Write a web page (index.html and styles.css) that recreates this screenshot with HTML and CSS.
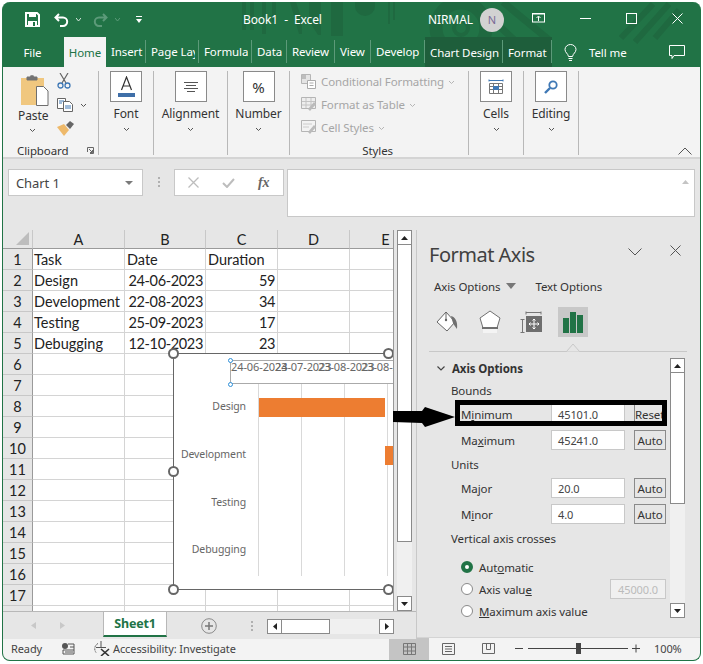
FILE: index.html
```html
<!DOCTYPE html>
<html lang="en">
<head>
<meta charset="utf-8">
<title>Book1 - Excel</title>
<link rel="stylesheet" href="styles.css">
</head>
<body>
<div class="win">
  <header class="titlebar">
    <svg class="pattern" width="696" height="65" viewBox="0 0 696 65">
      <g fill="#1f6940">
        <rect x="239" y="0" width="4" height="28"/><rect x="247" y="0" width="4" height="28"/><rect x="259" y="0" width="4" height="32"/><rect x="269" y="0" width="4" height="20"/>
        <path d="M287 0h6l6 18v14h-3z"/><path d="M306 0h12v33h-3l-9-14z"/><rect x="328" y="0" width="12" height="34"/>
        <path d="M352 0h20v4a10 10 0 0 1-20 0z"/>
        <rect x="385" y="0" width="2" height="22"/><rect x="390" y="0" width="2" height="18"/>
      </g>
      <g fill="none" stroke="#1f6940">
        <circle cx="458" cy="26" r="25" stroke-width="13"/>
        <circle cx="458" cy="26" r="7" stroke-width="4"/>
        <path d="M470 0l50 46M500 0l46 38" stroke-width="7"/>
        <path d="M618 36l32-34M632 40l34-38M652 36l24-28" stroke-width="6"/>
      </g>
    </svg>
    <svg class="ic save" width="15" height="15" viewBox="0 0 15 15"><path d="M1 1h11l2 2v11H1z" fill="none" stroke="#fff" stroke-width="2"/><rect x="4" y="1" width="7" height="4" fill="#fff"/><rect x="3" y="9" width="9" height="5" fill="#fff"/><rect x="8" y="10" width="2" height="4" fill="#217346"/></svg>
    <svg class="ic undo" width="15" height="14" viewBox="0 0 15 14"><path d="M5 1L1.500 4.500 5 8M2 4.500h7a4.200 4.200 0 0 1 0 8.400H6" fill="none" stroke="#fff" stroke-width="2"/></svg>
    <svg class="ic chev-t" width="5" height="3" viewBox="0 0 5 3"><path d="M0 0l2.500 3L5 0" fill="none" stroke="#d9e8df"/></svg>
    <svg class="ic redo" width="15" height="14" viewBox="0 0 15 14"><path d="M10 1l3.500 3.500L10 8M13 4.500H6a4.200 4.200 0 0 0 0 8.400h3" fill="none" stroke="#5c9a79" stroke-width="2"/></svg>
    <svg class="ic chev-r" width="5" height="3" viewBox="0 0 5 3"><path d="M0 0l2.500 3L5 0" fill="none" stroke="#5c9a79"/></svg>
    <svg class="ic qat" width="6" height="7" viewBox="0 0 6 7"><rect y="0" width="6" height="1" fill="#fff"/><path d="M0 3h6L3 7z" fill="#fff"/></svg>
    <span class="doc">Book1&nbsp; -&nbsp; Excel</span>
    <span class="user">NIRMAL</span>
    <span class="avatar">N</span>
    <svg class="ic ribdisp" width="14" height="10" viewBox="0 0 14 10"><rect x=".5" y=".5" width="12" height="8.500" fill="none" stroke="#fff"/><path d="M0 1h13M6.500 8V3.500M4.500 5l2-2 2 2" fill="none" stroke="#fff"/></svg>
    <svg class="ic min" width="11" height="1" viewBox="0 0 11 1"><rect width="11" height="1" fill="#fff"/></svg>
    <svg class="ic max" width="11" height="11" viewBox="0 0 11 11"><rect x=".5" y=".5" width="10" height="10" fill="none" stroke="#fff"/></svg>
    <svg class="ic close" width="11" height="11" viewBox="0 0 11 11"><path d="M.5.500l10 10M10.500.500l-10 10" stroke="#fff" fill="none"/></svg>
  </header>

  <nav class="tabs">
    <span class="tab tab-file">File</span>
    <span class="tab tab-home">Home</span>
    <span class="tab sep">Insert</span>
    <span class="tab sep"><span class="clip">Page Layout</span></span>
    <span class="tab sep"><span class="clip">Formulas</span></span>
    <span class="tab sep">Data</span>
    <span class="tab sep">Review</span>
    <span class="tab sep">View</span>
    <span class="tab sep">Develop</span>
    <span class="tab sep dark">Chart Design</span>
    <span class="tab sep dark">Format</span>
    <svg class="ic bulb" width="13" height="17" viewBox="0 0 13 17"><path d="M4.500 12.500C4 9.500 1 8.500 1 5.500a5.500 5 0 0 1 11 0c0 3-3 4-3.500 7z" fill="none" stroke="#fff"/><path d="M4.500 14.500h4M5 16.500h3" stroke="#fff" fill="none"/></svg>
    <span class="tell">Tell me</span>
    <svg class="ic comment" width="16" height="14" viewBox="0 0 16 14"><path d="M.5.500h15v10H5l-2 3v-3H.5z" fill="none" stroke="#fff"/></svg>
  </nav>

  <section class="ribbon">
    <div class="group g-clip">
      <div class="clip-main">
        <div class="paste">
          <svg width="29" height="32" viewBox="0 0 29 32"><path d="M1 4h23v27H1z" fill="#f0c77f"/><path d="M7 3h2.500a3 3 0 0 1 5 0H17v3H7z" fill="#737373" stroke="#737373"/><path d="M16.500 12.500h7l4.500 4.500v14.500H16.500z" fill="#fff" stroke="#6e6e6e"/></svg>
          <span class="lab paste-lab">Paste</span>
          <svg class="chev" width="5" height="3" viewBox="0 0 5 3"><path d="M0 0l2.500 2.500L5 0" fill="none" stroke="#555"/></svg>
        </div>
        <div class="clip-small">
          <svg width="15" height="16" viewBox="0 0 15 16"><path d="M3 0l6 10M11 0L5 10" stroke="#666" fill="none" stroke-width="1.200"/><circle cx="3.500" cy="12.500" r="2.500" fill="none" stroke="#3f78b5" stroke-width="1.300"/><circle cx="10.500" cy="12.500" r="2.500" fill="none" stroke="#3f78b5" stroke-width="1.300"/></svg>
          <div class="copy-row">
            <svg width="16" height="14" viewBox="0 0 16 14"><path d="M.5.500h8v10h-8z" fill="#fff" stroke="#666"/><path d="M6.500 3.500h6l3 3v7h-9z" fill="#fff" stroke="#666"/><path d="M2 3h5M2 5h3M8 8h6M8 10h6" stroke="#3f78b5"/></svg>
            <svg class="chev" width="5" height="3" viewBox="0 0 5 3"><path d="M0 0l2.500 2.500L5 0" fill="none" stroke="#555"/></svg>
          </div>
          <svg width="17" height="15" viewBox="0 0 17 15"><path d="M0 6l7-3 5 6-5 6z" fill="#eeb96a"/><path d="M9 4l4-4 4 3-4 5z" fill="#666"/></svg>
        </div>
      </div>
      <div class="foot"><span>Clipboard</span><svg class="launch" width="7" height="7" viewBox="0 0 7 7"><path d="M.5 5V.500h6v6H3M2 2l3.500 3.500M5.500 3v2.500H3" fill="none" stroke="#666"/></svg></div>
    </div>

    <div class="group g-font big">
      <span class="box"><svg width="17" height="21" viewBox="0 0 17 21"><path d="M3.500 14L8.500 1l5 13M5 10h7" fill="none" stroke="#333" stroke-width="1.200"/><rect x="0" y="17" width="17" height="4" fill="#3f6fa8"/></svg></span>
      <span class="lab">Font</span>
      <svg class="chev" width="5" height="3" viewBox="0 0 5 3"><path d="M0 0l2.500 2.500L5 0" fill="none" stroke="#555"/></svg>
    </div>
    <div class="group g-align big">
      <span class="box"><svg width="14" height="10" viewBox="0 0 14 10"><path d="M0 .500h14M2 3.500h10M0 6.500h14M3 9.500h8" stroke="#555"/></svg></span>
      <span class="lab">Alignment</span>
      <svg class="chev" width="5" height="3" viewBox="0 0 5 3"><path d="M0 0l2.500 2.500L5 0" fill="none" stroke="#555"/></svg>
    </div>
    <div class="group g-num big">
      <span class="box pct">%</span>
      <span class="lab">Number</span>
      <svg class="chev" width="5" height="3" viewBox="0 0 5 3"><path d="M0 0l2.500 2.500L5 0" fill="none" stroke="#555"/></svg>
    </div>

    <div class="group g-styles">
      <div class="style-rows">
        <div class="srow"><svg width="15" height="15" viewBox="0 0 15 15"><path d="M.5.500h9v9h-9z" fill="#e4e4e4" stroke="#b5b5b5"/><rect x="1" y="1" width="4" height="4" fill="#bdbdbd"/><path d="M6.500 6.500h8v8h-8z" fill="#fff" stroke="#aaa"/><path d="M8.500 9h4M8.500 11.500h4" stroke="#aaa"/></svg><span>Conditional Formatting</span><svg class="chev" width="5" height="3" viewBox="0 0 5 3"><path d="M0 0l2.500 2.500L5 0" fill="none" stroke="#b5b5b5"/></svg></div>
        <div class="srow"><svg width="15" height="15" viewBox="0 0 15 15"><path d="M.5.500h14v11h-14z" fill="#eee" stroke="#b5b5b5"/><path d="M5 1v10M10 1v10M1 4.500h13M1 8h13" stroke="#c4c4c4"/><path d="M7 12l6-7 2 2-6 7z" fill="#bbb"/></svg><span>Format as Table</span><svg class="chev" width="5" height="3" viewBox="0 0 5 3"><path d="M0 0l2.500 2.500L5 0" fill="none" stroke="#b5b5b5"/></svg></div>
        <div class="srow"><svg width="15" height="15" viewBox="0 0 15 15"><path d="M.5.500h14v11h-14z" fill="#f3f3f3" stroke="#b5b5b5"/><path d="M7 12l6-7 2 2-6 7z" fill="#bbb"/><path d="M2 4h9M2 7h6" stroke="#ccc"/></svg><span>Cell Styles</span><svg class="chev" width="5" height="3" viewBox="0 0 5 3"><path d="M0 0l2.500 2.500L5 0" fill="none" stroke="#b5b5b5"/></svg></div>
      </div>
      <div class="foot center"><span>Styles</span></div>
    </div>

    <div class="group g-cells big">
      <span class="box"><svg width="16" height="16" viewBox="0 0 16 16"><path d="M1 1.500h14M1 .500v2M15 .500v2" stroke="#3f78b5"/><path d="M1.500 4.500h13v10h-13zM1.500 7.500h13M1.500 10.500h13M5.500 4.500v10M10.500 4.500v10" fill="none" stroke="#777"/><rect x="5" y="7" width="6" height="4" fill="#3f78b5"/></svg></span>
      <span class="lab">Cells</span>
      <svg class="chev" width="5" height="3" viewBox="0 0 5 3"><path d="M0 0l2.500 2.500L5 0" fill="none" stroke="#555"/></svg>
    </div>
    <div class="group g-edit big">
      <span class="box"><svg width="14" height="14" viewBox="0 0 14 14"><circle cx="9" cy="5" r="3.700" fill="none" stroke="#3f78b5" stroke-width="1.800"/><path d="M6 8l-5 5" stroke="#3f78b5" stroke-width="2.400"/></svg></span>
      <span class="lab">Editing</span>
      <svg class="chev" width="5" height="3" viewBox="0 0 5 3"><path d="M0 0l2.500 2.500L5 0" fill="none" stroke="#555"/></svg>
    </div>
    <svg class="collapse" width="14" height="8" viewBox="0 0 14 8"><path d="M.5 7.500L7 1l6.500 6.500" fill="none" stroke="#555"/></svg>
  </section>

  <section class="fbar">
    <div class="namebox"><span>Chart 1</span><svg width="8" height="4" viewBox="0 0 8 4"><path d="M0 0h8L4 4z" fill="#7a7a7a"/></svg></div>
    <svg class="grip" width="2" height="10" viewBox="0 0 2 10"><path d="M0 0h2v2H0zM0 4h2v2H0zM0 8h2v2H0z" fill="#b0b0b0"/></svg>
    <div class="fxbox">
      <svg width="11" height="11" viewBox="0 0 11 11"><path d="M.5.500l10 10M10.500.500l-10 10" stroke="#bdbdbd" stroke-width="1.300" fill="none"/></svg>
      <svg width="13" height="10" viewBox="0 0 13 10"><path d="M1 5l4 4 7-8" stroke="#bdbdbd" stroke-width="2" fill="none"/></svg>
      <span class="fx">fx</span>
    </div>
    <div class="finput"><svg width="7" height="4" viewBox="0 0 7 4"><path d="M0 4l3.500-4L7 4z" fill="#c4c4c4"/></svg></div>
  </section>

  <main class="main">
    <div class="sheetcol">
      <div class="sheetrow">
        <div class="sheet">
          <div class="grid">
            <div class="corner"><svg width="13" height="13" viewBox="0 0 13 13"><path d="M13 0v13H0z" fill="#bdbdbd"/></svg></div>
            <div class="ch">A</div><div class="ch">B</div><div class="ch">C</div><div class="ch">D</div><div class="ch">E</div>
            <div class="rh">1</div><div class="c l">Task</div><div class="c">Date</div><div class="c">Duration</div><div class="c"></div><div class="c"></div>
            <div class="rh">2</div><div class="c l">Design</div><div class="c r">24-06-2023</div><div class="c r">59</div><div class="c"></div><div class="c"></div>
            <div class="rh">3</div><div class="c l">Development</div><div class="c r">22-08-2023</div><div class="c r">34</div><div class="c"></div><div class="c"></div>
            <div class="rh">4</div><div class="c l">Testing</div><div class="c r">25-09-2023</div><div class="c r">17</div><div class="c"></div><div class="c"></div>
            <div class="rh">5</div><div class="c l">Debugging</div><div class="c r">12-10-2023</div><div class="c r">23</div><div class="c"></div><div class="c"></div>
            <div class="rh">6</div><div class="c"></div><div class="c"></div><div class="c"></div><div class="c"></div><div class="c"></div>
            <div class="rh">7</div><div class="c"></div><div class="c"></div><div class="c"></div><div class="c"></div><div class="c"></div>
            <div class="rh">8</div><div class="c"></div><div class="c"></div><div class="c"></div><div class="c"></div><div class="c"></div>
            <div class="rh">9</div><div class="c"></div><div class="c"></div><div class="c"></div><div class="c"></div><div class="c"></div>
            <div class="rh">10</div><div class="c"></div><div class="c"></div><div class="c"></div><div class="c"></div><div class="c"></div>
            <div class="rh">11</div><div class="c"></div><div class="c"></div><div class="c"></div><div class="c"></div><div class="c"></div>
            <div class="rh">12</div><div class="c"></div><div class="c"></div><div class="c"></div><div class="c"></div><div class="c"></div>
            <div class="rh">13</div><div class="c"></div><div class="c"></div><div class="c"></div><div class="c"></div><div class="c"></div>
            <div class="rh">14</div><div class="c"></div><div class="c"></div><div class="c"></div><div class="c"></div><div class="c"></div>
            <div class="rh">15</div><div class="c"></div><div class="c"></div><div class="c"></div><div class="c"></div><div class="c"></div>
            <div class="rh">16</div><div class="c"></div><div class="c"></div><div class="c"></div><div class="c"></div><div class="c"></div>
            <div class="rh">17</div><div class="c"></div><div class="c"></div><div class="c"></div><div class="c"></div><div class="c"></div>
            <div class="rh"></div><div class="c"></div><div class="c"></div><div class="c"></div><div class="c"></div><div class="c"></div>
          </div>
          <div class="chart">
            <div class="axisbox"></div>
            <span class="date d1">24-06-2023</span><span class="date d2">24-07-2023</span><span class="date d3">23-08-2023</span><span class="date d4">23-08-2023</span>
            <i class="gl g1"></i><i class="gl g2"></i><i class="gl g3"></i><i class="gl g4"></i>
            <i class="bar b1"></i><i class="bar b2"></i>
            <span class="cat k1">Design</span><span class="cat k2">Development</span><span class="cat k3">Testing</span><span class="cat k4">Debugging</span>
            <i class="bh bh1"></i><i class="bh bh2"></i>
          </div>
          <i class="h h1"></i><i class="h h2"></i><i class="h h3"></i><i class="h h4"></i><i class="h h5"></i>
        </div>
        <div class="vscroll">
          <span class="sb-btn"><svg width="7" height="4" viewBox="0 0 7 4"><path d="M0 4l3.500-4L7 4z" fill="#222"/></svg></span>
          <span class="thumb"></span>
          <span class="sb-btn sb-end"><svg width="7" height="4" viewBox="0 0 7 4"><path d="M0 0l3.500 4L7 0z" fill="#222"/></svg></span>
        </div>
      </div>
      <div class="sheettabs">
        <svg class="nav1" width="5" height="7" viewBox="0 0 5 7"><path d="M5 0v7L0 3.500z" fill="#c8c8c8"/></svg>
        <svg class="nav2" width="5" height="7" viewBox="0 0 5 7"><path d="M0 0v7l5-3.500z" fill="#c8c8c8"/></svg>
        <span class="sheettab">Sheet1</span>
        <svg class="plus" width="16" height="16" viewBox="0 0 16 16"><circle cx="8" cy="8" r="7.300" fill="none" stroke="#8a8a8a"/><path d="M8 4v8M4 8h8" stroke="#777" stroke-width="1.500"/></svg>
        <svg class="tgrip" width="2" height="10" viewBox="0 0 2 10"><path d="M0 0h2v2H0zM0 4h2v2H0zM0 8h2v2H0z" fill="#b0b0b0"/></svg>
        <div class="hscroll">
          <span class="hb"><svg width="4" height="7" viewBox="0 0 4 7"><path d="M4 0v7L0 3.500z" fill="#222"/></svg></span>
          <span class="hthumb"></span>
          <span class="hb hb-end"><svg width="4" height="7" viewBox="0 0 4 7"><path d="M0 0v7l4-3.500z" fill="#222"/></svg></span>
        </div>
      </div>
    </div>

    <aside class="pane">
      <div class="phead">
        <h1>Format Axis</h1>
        <svg class="p-chev" width="14" height="8" viewBox="0 0 14 8"><path d="M.5.500L7 7l6.500-6.500" fill="none" stroke="#555"/></svg>
        <svg class="p-x" width="11" height="11" viewBox="0 0 11 11"><path d="M.5.500l10 10M10.500.500l-10 10" stroke="#555" fill="none"/></svg>
      </div>
      <div class="ptabs"><span>Axis Options</span><svg width="10" height="6" viewBox="0 0 10 6"><path d="M0 0h10L5 6z" fill="#777"/></svg><span class="pt2">Text Options</span></div>
      <div class="picons">
        <svg class="pi1" width="24" height="24" viewBox="0 0 24 24"><path d="M11 2l9 10-8 9-10-9z" fill="#fff" stroke="#666"/><path d="M11 2v8" stroke="#666"/><circle cx="11" cy="10" r="1.200" fill="#666"/><path d="M16 6c4 1 7 5 6 13-2-3-4-5-5-9z" fill="#707070"/></svg>
        <svg class="pi2" width="22" height="24" viewBox="0 0 22 24"><path d="M11 1l10 7-3 10H4L1 8z" fill="#fff" stroke="#707070"/><rect x="4" y="18" width="14" height="5" fill="#f4f4f4"/><path d="M3 18h16" stroke="#707070" stroke-width="2"/></svg>
        <svg class="pi3" width="22" height="22" viewBox="0 0 22 22"><path d="M6 1.500h15M6 .5v3M21 .5v3M.5 8.500h4M.5 21.500h4M2.500 8.500v13" stroke="#777" fill="none"/><rect x="6" y="5" width="16" height="16" fill="#6e6e6e"/><path d="M14 8v10M9 13h10M12.500 9.500L14 8l1.500 1.500M12.500 16.500L14 18l1.500-1.500M10.500 11.500L9 13l1.500 1.500M17.500 11.500L19 13l-1.500 1.500" stroke="#fff" fill="none"/></svg>
        <span class="pi4"><svg width="20" height="21" viewBox="0 0 20 21"><rect y="6" width="6" height="15" fill="#217346"/><rect x="7" y="0" width="6" height="21" fill="#217346"/><rect x="14" y="3" width="6" height="18" fill="#217346"/></svg></span>
      </div>
      <div class="pdiv"><svg width="14" height="9" viewBox="0 0 14 9"><path d="M0 8.500h.5L7 1l6.500 7.500h.5" fill="#e6e6e6" stroke="#c8c8c8"/></svg></div>
      <div class="pbody">
        <div class="pcontent">
          <div class="sec"><svg width="8" height="5" viewBox="0 0 8 5"><path d="M.5.500L4 4 7.500.500" fill="none" stroke="#444" stroke-width="1.200"/></svg><b>Axis Options</b></div>
          <div class="sub">Bounds</div>
          <div class="frow hl"><label>M<u>i</u>nimum</label><span class="inp">45101.0</span><span class="btn reset">Reset</span><i class="blackbox"></i></div>
          <div class="frow"><label>Ma<u>x</u>imum</label><span class="inp">45241.0</span><span class="btn">Auto</span></div>
          <div class="sub">Units</div>
          <div class="frow"><label>Ma<u>j</u>or</label><span class="inp">20.0</span><span class="btn">Auto</span></div>
          <div class="frow"><label>M<u>i</u>nor</label><span class="inp">4.0</span><span class="btn">Auto</span></div>
          <div class="sub">Vertical axis crosses</div>
          <div class="rad first"><i class="dot on"></i><span>Aut<u>o</u>matic</span></div>
          <div class="rad"><i class="dot"></i><span>Axis valu<u>e</u></span><span class="inp dis">45000.0</span></div>
          <div class="rad"><i class="dot"></i><span><u>M</u>aximum axis value</span></div>
        </div>
        <div class="pscroll">
          <span class="sb-btn"><svg width="7" height="4" viewBox="0 0 7 4"><path d="M0 4l3.500-4L7 4z" fill="#222"/></svg></span>
          <span class="pthumb"></span>
          <span class="sb-btn sb-end"><svg width="7" height="4" viewBox="0 0 7 4"><path d="M0 0l3.500 4L7 0z" fill="#222"/></svg></span>
        </div>
      </div>
    </aside>
    <svg class="arrow" width="63" height="22" viewBox="0 0 63 22"><path d="M1 5H30L33 1L63 11L33 21L30 17L1 16z" fill="#000"/></svg>
  </main>

  <footer class="status">
    <span class="ready">Ready</span>
    <svg class="st1" width="13" height="12" viewBox="0 0 13 12"><circle cx="3" cy="3" r="3" fill="#555"/><path d="M6 1h6v10H1V7h11M3 9h8M8 4h4" stroke="#555" fill="none"/></svg>
    <svg class="st2" width="17" height="15" viewBox="0 0 17 15"><path d="M5 2.500a6 6 0 0 0-2 9" stroke="#555" fill="none" stroke-dasharray="2 1"/><path d="M8 0v7M3 6.500h10" stroke="#555" fill="none"/><path d="M8 8l8 7M16 8l-8 7" stroke="#333" stroke-width="1.600"/></svg>
    <span class="acc">Accessibility: Investigate</span>
    <span class="view-on"><svg width="13" height="12" viewBox="0 0 13 12"><path d="M.5.500h12v11H.5zM.5 4h12M.5 8h12M4.500.500v11M8.500.500v11" fill="none" stroke="#777"/></svg></span>
    <svg class="v2" width="13" height="12" viewBox="0 0 13 12"><path d="M.5.500h12v11H.5z" fill="none" stroke="#666"/><path d="M3 3.500h7M3 6h7M3 8.500h7" stroke="#666"/></svg>
    <svg class="v3" width="13" height="12" viewBox="0 0 13 12"><path d="M.5.500h12v10H.5zM4.500.500v6h4v-6" fill="none" stroke="#666"/></svg>
    <svg class="zoom" width="125" height="11" viewBox="0 0 125 11"><path d="M0 5.500h8M13 5.500h100M117 5.500h8M121 1.500v8" stroke="#444"/><rect x="61" y="0" width="5" height="11" fill="#444"/></svg>
    <span class="pct100">100%</span>
  </footer>
</div>
</body>
</html>
```

FILE: styles.css
```css
* { box-sizing: border-box; }
html, body { margin: 0; padding: 0; background: #fff; }
body { width: 703px; height: 664px; overflow: hidden; font-family: "Noto Sans", "Open Sans", sans-serif; color: #333; letter-spacing: -.1px; }
svg { display: block; flex: none; }
i { display: block; font-style: normal; }

.win { width: 699px; height: 659px; margin: 2px 0 0 2px; border: 1px solid #217346; border-top: 0; border-radius: 8px; overflow: hidden; background: #217346; display: flex; flex-direction: column; position: relative; }

.titlebar { height: 35px; display: flex; align-items: center; position: relative; color: #fff; font-size: 12px; padding-left: 22px; flex: none; }
.titlebar > .ic, .titlebar > span { position: relative; }
.pattern { position: absolute; left: 0; top: 0; }
.undo { margin-left: 14px; }
.chev-t { margin-left: 7px; }
.redo { margin-left: 12px; }
.chev-r { margin-left: 7px; }
.qat { margin-left: 16px; }
.doc { margin-left: 101px; width: 100px; white-space: nowrap; }
.user { margin-left: 85px; width: 45px; }
.avatar { width: 24px; height: 24px; border-radius: 50%; background: #d2d2d2; color: #7a6a96; font-size: 11px; display: flex; align-items: center; justify-content: center; margin-left: 7px; }
.ribdisp { margin-left: 28px; margin-top: -3px; }
.min { margin-left: 34px; margin-top: -3px; }
.max { margin-left: 35px; margin-top: -3px; }
.close { margin-left: 35px; margin-top: -3px; }

.tabs { height: 30px; display: grid; grid-template-columns: 61px 42px 40px 53px 53px 35px 48px 36px 54px 78px 49px 37px 38px 1fr; align-items: center; color: #fff; font-size: 11.500px; position: relative; flex: none; }
.tab { height: 100%; display: flex; align-items: center; justify-content: center; overflow: hidden; white-space: nowrap; }
.tab-file { padding-right: 2px; }
.tab-home { background: #f3f3f3; color: #217346; }
.sep { box-shadow: inset -1px 0 0 #5c9a79; height: 23px; align-self: start; margin-top: 3px; justify-content: flex-start; padding-left: 5px; }
.clip { display: block; width: 44px; overflow: hidden; }
.dark { background: #1e5e3b linear-gradient(#5c9a79, #5c9a79) right 3px / 1px 23px no-repeat; box-shadow: none; height: 30px; margin-top: 0; }
.bulb { margin-left: 12px; }
.tell { white-space: nowrap; }
.comment { margin-left: 42px; }

.ribbon { height: 92px; background: #f3f3f3; border-bottom: 2px solid #d4d4d4; display: flex; align-items: flex-start; padding-top: 4px; position: relative; flex: none; font-size: 11.500px; }
.group { height: 84px; border-right: 1px solid #b8b8b8; display: flex; flex-direction: column; flex: none; }
.g-clip { width: 96px; }
.g-font { width: 55px; }
.g-align { width: 74px; }
.g-num { width: 62px; }
.g-styles { width: 179px; }
.g-cells { width: 55px; }
.g-edit { width: 55px; }
.big { align-items: center; }
.box { width: 32px; height: 31px; background: #fff; border: 1px solid #8a8a8a; display: flex; align-items: center; justify-content: center; color: #333; }
.pct { font-size: 15px; }
.lab { margin-top: 3px; line-height: 17px; color: #333; white-space: nowrap; font-size: 12px; }
.chev { margin-top: 6px; }
.clip-main { display: flex; flex: 1; }
.paste { width: 52px; margin-left: 17px; display: flex; flex-direction: column; align-items: flex-start; padding-top: 3px; }
.paste-lab { margin: 1px 0 0 -2px; }
.paste .chev { margin: 5px 0 0 10px; }
.clip-small { display: flex; flex-direction: column; gap: 9px; margin-left: -15px; padding-top: 2px; }
.copy-row { display: flex; align-items: center; gap: 8px; }
.copy-row .chev { margin: 0; }
.foot { height: 17px; flex: none; display: flex; align-items: center; justify-content: space-between; padding: 8px 4px 0 14px; font-size: 11.500px; color: #333; }
.foot.center { justify-content: flex-end; padding: 8px 75px 0 0; }
.style-rows { flex: none; height: 68px; margin-top: -1px; display: flex; flex-direction: column; padding: 0 0 0 11px; color: #a6a6a6; font-size: 11.500px; }
.srow { height: 23px; flex: none; display: flex; align-items: center; gap: 5px; white-space: nowrap; }
.srow .chev { margin: 1px 0 0 0; }
.collapse { position: absolute; right: 8px; top: 80px; }

.fbar { height: 71px; padding: 10px 0 0 5px; display: flex; align-items: flex-start; flex: none; background: #e6e6e6; }
.namebox { width: 135px; height: 27px; background: #fff; border: 1px solid #c8c8c8; display: flex; align-items: center; justify-content: space-between; padding: 0 9px 0 7px; font-size: 13px; color: #444; }
.grip { margin: 8px 14px 0 15px; }
.fxbox { width: 110px; height: 27px; background: #fff; border: 1px solid #c8c8c8; display: flex; align-items: center; gap: 23px; padding-left: 13px; }
.fx { font-family: "Liberation Serif", serif; font-style: italic; font-size: 14px; color: #666; font-weight: bold; }
.finput { width: 408px; height: 48px; margin-left: 3px; background: #fff; border: 1px solid #c8c8c8; display: flex; justify-content: flex-end; padding: 10px 5px 0 0; }

.main { flex: 1; display: flex; position: relative; min-height: 0; background: #e6e6e6; }
.sheetcol { width: 413px; display: flex; flex-direction: column; flex: none; }
.sheetrow { height: 381px; display: flex; flex: none; }
.sheet { width: 391px; height: 381px; position: relative; overflow: hidden; flex: none; border-right: 1px solid #999; }
.grid { display: grid; grid-template-columns: 30px 92px 81px 72px 72px 72px; grid-template-rows: 19px repeat(18, 21px); background: #fff; font-family: Lato, "Noto Sans", sans-serif; font-size: 14.500px; color: #222; letter-spacing: 0; }
.corner { background: #e6e6e6; border-right: 1px solid #c8c8c8; border-bottom: 1px solid #9a9a9a; display: flex; align-items: flex-end; justify-content: flex-end; padding: 0 3px 3px 0; }
.ch { background: #e6e6e6; border-right: 1px solid #c8c8c8; border-bottom: 1px solid #9a9a9a; display: flex; align-items: center; justify-content: center; }
.rh { background: #e6e6e6; border-right: 1px solid #9a9a9a; border-bottom: 1px solid #c8c8c8; display: flex; align-items: center; justify-content: center; }
.c { border-right: 1px solid #d4d4d4; border-bottom: 1px solid #d4d4d4; display: flex; align-items: center; padding: 0 2px; white-space: nowrap; }
.c.l { padding-left: 1px; }
.c.r { justify-content: flex-end; letter-spacing: -.35px; }

.chart { position: absolute; left: 170px; top: 123px; width: 240px; height: 237px; background: #fff; border: 1px solid #666; font-size: 10.500px; color: #666; }
.axisbox { position: absolute; left: 56px; top: 6px; width: 180px; height: 24px; border: 1px solid #aaa; }
.date { position: absolute; top: 3px; line-height: 20px; font-size: 11px; color: #666; white-space: nowrap; }
.d1 { left: 57px; } .d2 { left: 101px; } .d3 { left: 144px; } .d4 { left: 187px; }
.gl { position: absolute; top: 30px; height: 192px; width: 1px; background: #d9d9d9; }
.g1 { left: 84px; } .g2 { left: 127px; } .g3 { left: 170px; } .g4 { left: 213px; }
.bar { position: absolute; background: #ed7d31; height: 19px; }
.b1 { left: 85px; top: 44px; width: 126px; }
.b2 { left: 211px; top: 92px; width: 10px; }
.cat { position: absolute; right: 166px; line-height: 14px; white-space: nowrap; }
.k1 { top: 45px; } .k2 { top: 93px; } .k3 { top: 141px; } .k4 { top: 188px; }
.bh { position: absolute; width: 5px; height: 5px; border-radius: 50%; background: #fff; border: 1px solid #2e8fd8; left: 54px; }
.bh1 { top: 4px; } .bh2 { top: 28px; }
.h { position: absolute; width: 11px; height: 11px; border-radius: 50%; background: #fff; border: 2px solid #666; }
.h1 { left: 165px; top: 118px; } .h2 { left: 380px; top: 118px; } .h3 { left: 165px; top: 236px; } .h4 { left: 165px; top: 354px; } .h5 { left: 380px; top: 354px; }

.vscroll { width: 15px; margin-left: 3px; height: 381px; display: flex; flex-direction: column; background: #f0f0f0; flex: none; }
.sb-btn { height: 15px; width: 15px; background: #fff; border: 1px solid #8a8a8a; display: flex; align-items: center; justify-content: center; flex: none; }
.thumb { height: 297px; background: #fff; border: 1px solid #8a8a8a; border-top: 0; flex: none; }
.sb-end { margin-top: auto; }

.sheettabs { height: 28px; border-top: 1px solid #b8b8b8; display: flex; align-items: flex-start; background: #e6e6e6; flex: none; }
.nav1 { margin: 10px 0 0 28px; }
.nav2 { margin: 10px 0 0 24px; }
.sheettab { width: 64px; height: 25px; margin-left: 38px; background: #fff; border: 1px solid #b8b8b8; border-top: 0; border-bottom: 2px solid #217346; color: #217346; font-weight: 700; font-size: 12.500px; letter-spacing: -.2px; display: flex; align-items: center; justify-content: center; padding-bottom: 1px; }
.plus { margin: 6px 0 0 34px; }
.tgrip { margin: 9px 0 0 34px; }
.hscroll { width: 127px; height: 15px; margin: 7px 0 0 14px; background: #f0f0f0; display: flex; }
.hb { width: 15px; height: 15px; background: #fff; border: 1px solid #8a8a8a; display: flex; align-items: center; justify-content: center; }
.hthumb { width: 48px; background: #fff; border: 1px solid #8a8a8a; border-left: 0; }
.hb-end { margin-left: auto; }

.pane { flex: 1; height: 409px; border-left: 1px solid #c8c8c8; position: relative; font-size: 11.500px; color: #333; }
.phead { height: 46px; display: flex; align-items: center; padding-left: 12px; }
.phead h1 { margin: 0; font-weight: 400; font-size: 20px; letter-spacing: -.5px; color: #404040; white-space: nowrap; width: 205px; padding-top: 2px; }
.p-chev { margin: -3px 0 0 -6px; }
.p-x { margin: -5px 0 0 28px; }
.ptabs { height: 20px; display: flex; align-items: center; padding-left: 17px; gap: 6px; }
.pt2 { margin-left: 13px; }
.picons { height: 41px; padding: 11px 0 0 18px; display: flex; align-items: center; position: relative; }
.pi2 { margin-left: 20px; }
.pi3 { margin-left: 19px; }
.pi4 { width: 30px; height: 30px; background: #c8c8c8; margin-left: 16px; display: flex; align-items: center; justify-content: center; }
.pdiv { height: 15px; margin: 0 13px 6px 12px; border-bottom: 1px solid #c8c8c8; display: flex; justify-content: center; padding-left: 29px; align-items: flex-end; }
.pdiv svg { margin-bottom: -1px; }
.pbody { display: flex; height: 260px; position: relative; }
.pcontent { width: 253px; flex: none; }
.sec { height: 21px; display: flex; align-items: center; padding-left: 20px; gap: 7px; }
.sec b { font-weight: 700; }
.sub { height: 22px; display: flex; align-items: center; padding-left: 34px; white-space: nowrap; }
.frow { height: 26px; display: flex; align-items: center; padding-left: 44px; position: relative; }
.frow label { width: 90px; }
.inp { width: 74px; height: 20px; background: #fff; border: 1px solid #c8c8c8; display: flex; align-items: center; padding-left: 6px; color: #444; font-size: 11px; }
.btn { width: 32px; height: 20px; margin-left: 9px; border: 1px solid #8a8a8a; display: flex; align-items: center; justify-content: center; background: #e6e6e6; padding: 0; }
.reset { border-color: #e6e6e6 #e6e6e6 #e6e6e6 #8a8a8a; justify-content: flex-start; white-space: nowrap; overflow: hidden; }
.blackbox { position: absolute; left: 38px; top: -1px; width: 212px; height: 26px; border: 5px solid #000; }
.rad { height: 22px; display: flex; align-items: center; padding-left: 44px; gap: 6px; white-space: nowrap; }
.rad.first { margin-top: 7px; }
.dot { width: 12px; height: 12px; border-radius: 50%; background: #fff; border: 1px solid #8a8a8a; flex: none; }
.dot.on { border: 4px solid #217346; }
.dis { width: 56px; margin-left: auto; margin-right: 4px; color: #bbb; background: #f0f0f0; justify-content: center; padding: 0; }
.pscroll { width: 15px; height: 260px; background: #f0f0f0; display: flex; flex-direction: column; }
.pthumb { height: 131px; background: #fff; border: 1px solid #8a8a8a; border-top: 0; flex: none; }

.arrow { position: absolute; left: 389px; top: 176px; }

.status { height: 23px; background: #f3f3f3; border-top: 1px solid #d4d4d4; display: flex; align-items: center; font-size: 11px; color: #444; flex: none; padding-bottom: 1px; }
.ready { margin-left: 8px; width: 51px; }
.st2 { margin-left: 18px; }
.acc { margin-left: 3px; width: 276px; white-space: nowrap; }
.view-on { width: 40px; height: 22px; background: #c4c4c4; display: flex; align-items: center; justify-content: center; }
.v2 { margin-left: 13px; }
.v3 { margin-left: 27px; }
.zoom { margin-left: 20px; }
.pct100 { margin-left: 14px; }
```
